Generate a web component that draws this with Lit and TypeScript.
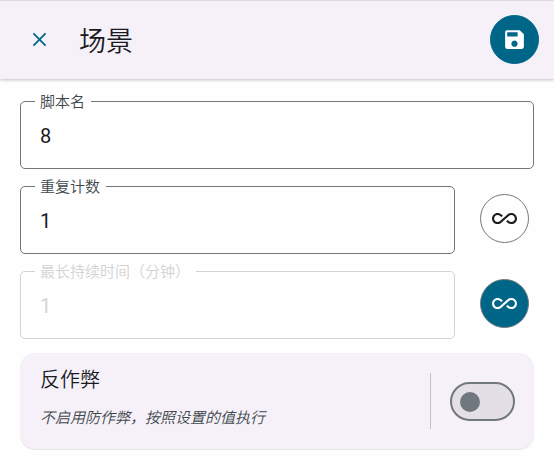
import { LitElement, html, css, svg } from "lit";
import { customElement, state } from "lit/decorators.js";
import { classMap } from "lit/directives/class-map.js";

const icon = (d: string) => html`
  <svg viewBox="0 0 24 24" aria-hidden="true">${svg`<path d=${d}></path>`}</svg>
`;

const CLOSE =
  "M18.4 6.8 17.2 5.6 12 10.8 6.8 5.6 5.6 6.8 10.8 12 5.6 17.2 6.8 18.4 12 13.2 17.2 18.4 18.4 17.2 13.2 12z";
const SAVE =
  "M17 3H5c-1.11 0-2 .9-2 2v14c0 1.1.89 2 2 2h14c1.1 0 2-.9 2-2V7l-4-4zm-5 16c-1.66 0-3-1.34-3-3s1.34-3 3-3 3 1.34 3 3-1.34 3-3 3zm3-10H5V5h10v4z";
const INFINITE =
  "M18.6 6.62c-1.44 0-2.8.56-3.77 1.53L7.8 14.39c-.64.64-1.49.99-2.4.99-1.87 0-3.39-1.51-3.39-3.38S3.53 8.62 5.4 8.62c.91 0 1.76.35 2.44 1.03l1.13 1 1.51-1.34L9.22 8.2C8.2 7.18 6.84 6.62 5.4 6.62 2.42 6.62 0 9.04 0 12s2.42 5.38 5.4 5.38c1.44 0 2.8-.56 3.77-1.53l7.03-6.24c.64-.64 1.49-.99 2.4-.99 1.87 0 3.39 1.51 3.39 3.38s-1.52 3.38-3.39 3.38c-.9 0-1.76-.35-2.44-1.03l-1.14-1.01-1.51 1.34 1.27 1.12c1.02 1.01 2.37 1.57 3.82 1.57 2.98 0 5.4-2.41 5.4-5.38s-2.42-5.38-5.4-5.38z";

@customElement("app-root")
export class AppRoot extends LitElement {
  @state() private endlessRepeat = false;
  @state() private endlessDuration = true;

  static styles = css`
    :host {
      display: block;
      min-height: 100vh;
      background: #fefefe;
      color: #1b1b1f;
      font-family: Roboto, "Noto Sans CJK SC", sans-serif;
    }
    *,
    *::before {
      box-sizing: border-box;
    }
    button {
      display: grid;
      place-items: center;
      flex: none;
      padding: 0;
      border: 0;
      background: none;
      color: inherit;
      cursor: pointer;
    }
    svg {
      display: block;
      width: 25px;
      height: 25px;
      fill: currentColor;
    }
    .bar {
      display: flex;
      align-items: center;
      height: 79px;
      padding: 0 15px 1px;
      border-top: 1px solid #dedae1;
      background: #f6f1f9;
      box-shadow: 0 1px 3px rgba(0, 0, 0, 0.25);
    }
    .bar h1 {
      flex: 1;
      margin: 0 0 0 15px;
      padding-top: 4px;
      font-size: 27px;
      line-height: 40px;
      font-weight: 350;
    }
    .close {
      width: 49px;
      height: 49px;
      color: #006688;
    }
    .round {
      width: 49px;
      height: 49px;
      border: 1px solid #70787d;
      border-radius: 50%;
    }
    .filled {
      background: #006688;
      color: #fff;
    }
    .save {
      border-color: #006688;
    }
    .content {
      display: flex;
      flex-direction: column;
      gap: 17px;
      padding: 22px 20px 15px;
    }
    .row {
      display: flex;
      align-items: flex-start;
      gap: 25px;
      padding-right: 5px;
    }
    .row .round {
      margin-top: 8px;
    }
    .field {
      position: relative;
      flex: 1;
      min-width: 0;
      color: #40484c;
    }
    .field label {
      position: absolute;
      left: 15px;
      top: -10px;
      padding: 0 6px 0 5px;
      background: #fefefe;
      font-size: 15px;
      line-height: 22px;
      font-weight: 350;
    }
    .field input {
      display: block;
      width: 100%;
      height: 68px;
      padding: 2px 19px 0;
      border: 1px solid #70787d;
      border-radius: 5px;
      background: none;
      color: #1b1b1f;
      font: inherit;
      font-size: 20px;
      outline: none;
    }
    .field.off label {
      color: #d2d3d4;
    }
    .field.off input {
      border-color: #d2d3d4;
      color: #d2d3d4;
    }
    .card {
      display: flex;
      align-items: center;
      gap: 19px;
      margin-top: -3px;
      padding: 15px 19px 20px 20px;
      border-radius: 15px;
      background: #f6f1f9;
      box-shadow: 0 1px 1px rgba(0, 0, 0, 0.1);
    }
    .text {
      flex: 1;
      min-width: 0;
      font-weight: 350;
    }
    .text label {
      display: block;
      font-size: 20px;
      line-height: 24px;
    }
    .text p {
      margin: 15px 0 0;
      color: #40484c;
      font-size: 15px;
      line-height: 22px;
      font-style: italic;
    }
    .rule {
      align-self: stretch;
      width: 1px;
      margin-top: 5px;
      background: #c4c2c8;
    }
    .switch {
      appearance: none;
      display: flex;
      align-items: center;
      flex: none;
      width: 65px;
      height: 39px;
      margin: 6px 0 0;
      padding: 0 8px;
      border: 2px solid #70787d;
      border-radius: 20px;
      background: #e4dfe6;
      cursor: pointer;
    }
    .switch::before {
      content: "";
      width: 20px;
      height: 20px;
      border-radius: 50%;
      background: #70787d;
    }
    .switch:checked {
      justify-content: flex-end;
      border-color: #006688;
      background: #006688;
    }
    .switch:checked::before {
      background: #fff;
    }
  `;

  private field(id: string, label: string, value: string, off = false) {
    return html`
      <div class=${classMap({ field: true, off })}>
        <input id=${id} type="text" inputmode="numeric" .value=${value} ?disabled=${off} />
        <label for=${id}>${label}</label>
      </div>
    `;
  }

  private endless(on: boolean, toggle: () => void) {
    return html`
      <button
        class=${classMap({ round: true, filled: on })}
        type="button"
        aria-label="∞"
        aria-pressed=${String(on)}
        @click=${toggle}
      >
        ${icon(INFINITE)}
      </button>
    `;
  }

  render() {
    return html`
      <header class="bar">
        <button class="close" type="button" aria-label="关闭">${icon(CLOSE)}</button>
        <h1>场景</h1>
        <button class="round filled save" type="button" aria-label="保存">${icon(SAVE)}</button>
      </header>
      <main class="content">
        ${this.field("name", "脚本名", "8")}
        <div class="row">
          ${this.field("repeat", "重复计数", "1", this.endlessRepeat)}
          ${this.endless(this.endlessRepeat, () => (this.endlessRepeat = !this.endlessRepeat))}
        </div>
        <div class="row">
          ${this.field("duration", "最长持续时间（分钟）", "1", this.endlessDuration)}
          ${this.endless(this.endlessDuration, () => (this.endlessDuration = !this.endlessDuration))}
        </div>
        <section class="card">
          <div class="text">
            <label for="anti">反作弊</label>
            <p id="anti-note">不启用防作弊，按照设置的值执行</p>
          </div>
          <div class="rule"></div>
          <input class="switch" id="anti" type="checkbox" role="switch" aria-describedby="anti-note" />
        </section>
      </main>
    `;
  }
}
